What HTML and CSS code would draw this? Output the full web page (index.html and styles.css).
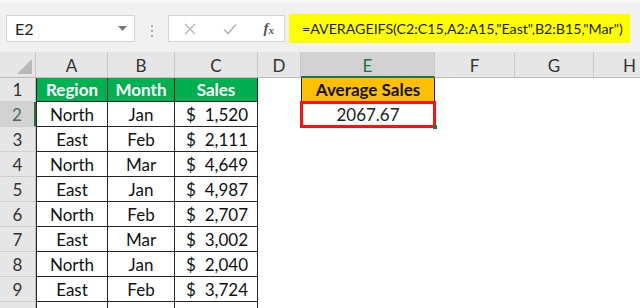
FILE: index.html
```html
<!DOCTYPE html>
<html lang="en">
<head>
    <meta charset="UTF-8">
    <title>AVERAGEIFS</title>
    <link rel="stylesheet" href="styles.css">
</head>
<body>

<div class="toolbar">
    <div class="namebox">
        <span>E2</span>
        <svg class="caret" width="9" height="5" viewBox="0 0 9 5"><path d="M0 0h9L4.5 5z" fill="#7a7a7a"/></svg>
    </div>
    <div class="grip"><i></i><i></i><i></i></div>
    <div class="fbuttons">
        <svg width="12" height="12" viewBox="0 0 12 12"><path d="M1 1l10 10M11 1L1 11" stroke="#b4b4b4" stroke-width="1.3"/></svg>
        <svg width="14" height="12" viewBox="0 0 14 12"><path d="M1 6.5l4 4L13 1.5" stroke="#b4b4b4" stroke-width="1.6" fill="none"/></svg>
        <span class="fx">f<sub>x</sub></span>
    </div>
    <div class="formula">=AVERAGEIFS(C2:C15,A2:A15,"East",B2:B15,"Mar")</div>
</div>

<div class="sheet">
    <!-- column headers -->
    <div class="corner"><span class="tri"></span></div>
    <div class="colhead">A</div>
    <div class="colhead">B</div>
    <div class="colhead">C</div>
    <div class="colhead">D</div>
    <div class="colhead sel">E</div>
    <div class="colhead">F</div>
    <div class="colhead">G</div>
    <div class="colhead">H</div>

    <!-- row 1 -->
    <div class="rowhead">1</div>
    <div class="tbl first hd">Region</div>
    <div class="tbl hd">Month</div>
    <div class="tbl hd">Sales</div>
    <div class="cell"></div>
    <div class="avg-h">Average Sales</div>
    <div class="cell"></div>
    <div class="cell"></div>
    <div class="cell"></div>

    <!-- row 2 -->
    <div class="rowhead sel">2</div>
    <div class="tbl first">North</div>
    <div class="tbl">Jan</div>
    <div class="tbl acct"><span>$</span><span>1,520</span></div>
    <div class="cell"></div>
    <div class="avg-v">2067.67</div>
    <div class="cell"></div>
    <div class="cell"></div>
    <div class="cell"></div>

    <div class="rowhead">3</div>
    <div class="tbl first">East</div>
    <div class="tbl">Feb</div>
    <div class="tbl acct"><span>$</span><span>2,111</span></div>
    <div class="cell wide"></div>

    <div class="rowhead">4</div>
    <div class="tbl first">North</div>
    <div class="tbl">Mar</div>
    <div class="tbl acct"><span>$</span><span>4,649</span></div>
    <div class="cell wide"></div>

    <div class="rowhead">5</div>
    <div class="tbl first">East</div>
    <div class="tbl">Jan</div>
    <div class="tbl acct"><span>$</span><span>4,987</span></div>
    <div class="cell wide"></div>

    <div class="rowhead">6</div>
    <div class="tbl first">North</div>
    <div class="tbl">Feb</div>
    <div class="tbl acct"><span>$</span><span>2,707</span></div>
    <div class="cell wide"></div>

    <div class="rowhead">7</div>
    <div class="tbl first">East</div>
    <div class="tbl">Mar</div>
    <div class="tbl acct"><span>$</span><span>3,002</span></div>
    <div class="cell wide"></div>

    <div class="rowhead">8</div>
    <div class="tbl first">North</div>
    <div class="tbl">Jan</div>
    <div class="tbl acct"><span>$</span><span>2,040</span></div>
    <div class="cell wide"></div>

    <div class="rowhead">9</div>
    <div class="tbl first">East</div>
    <div class="tbl">Feb</div>
    <div class="tbl acct"><span>$</span><span>3,724</span></div>
    <div class="cell wide"></div>

    <!-- row 10 is cut by the window edge -->
    <div class="rowhead last"></div>
    <div class="tbl first last"></div>
    <div class="tbl last"></div>
    <div class="tbl last"></div>
    <div class="cell wide"></div>
</div>

</body>
</html>
```

FILE: styles.css
```css
body {
    margin: 0;
    width: 640px;
    height: 308px;
    overflow: hidden;
    background: #fff;
    font-family: Lato, "Open Sans", sans-serif;
}

/* formula bar area */
.toolbar {
    display: flex;
    align-items: flex-start;
    height: 52px;
    box-sizing: border-box;
    padding: 14px 0 0 6px;
    background: #f1f1f1;
    border-top: 3px solid #f7f7f7;
}

.namebox {
    display: flex;
    align-items: center;
    justify-content: space-between;
    width: 129px;
    height: 27px;
    margin-top: -2px;
    box-sizing: border-box;
    padding: 0 7px 0 8px;
    background: #fff;
    border: 1px solid #d4d4d4;
    font-size: 16px;
    color: #222;
}

.grip {
    display: flex;
    flex-direction: column;
    gap: 3px;
    width: 33px;
    align-items: center;
    padding-top: 8px;
}

.grip i {
    width: 2px;
    height: 2px;
    background: #a8a8a8;
}

.fbuttons {
    display: flex;
    align-items: center;
    justify-content: space-between;
    width: 117px;
    height: 27px;
    margin-top: -2px;
    box-sizing: border-box;
    padding: 0 10px 0 15px;
    background: #fff;
    border: 1px solid #d4d4d4;
}

.fx {
    font-family: "Liberation Serif", serif;
    font-style: italic;
    font-weight: bold;
    font-size: 15px;
    color: #555;
}

.fx sub {
    font-size: 11px;
    vertical-align: -1px;
}

.formula {
    width: 341px;
    height: 29px;
    margin-left: 4px;
    margin-top: -3px;
    box-sizing: border-box;
    padding: 6px 0 0 13px;
    background: #ffff00;
    font-size: 14.2px;
    color: #1a1a1a;
    white-space: nowrap;
}

/* worksheet grid */
.sheet {
    display: grid;
    grid-template-columns: 36px 72px 67px 83px 43px 134px 80px 79px 72px;
    grid-template-rows: 26px 24px repeat(8, 25px) 6px;
    font-size: 17px;
}

.corner, .colhead, .rowhead {
    background: #e6e6e6;
    color: #333;
    box-sizing: border-box;
    display: flex;
    align-items: center;
    justify-content: center;
}

.corner {
    position: relative;
    border-right: 1px solid #c8c8c8;
    border-bottom: 1px solid #bcbcbc;
}

.corner .tri {
    position: absolute;
    right: 3px;
    bottom: 3px;
    border-left: 15px solid transparent;
    border-bottom: 15px solid #b8b8b8;
}

.colhead {
    border-right: 1px solid #c8c8c8;
    border-bottom: 1px solid #bcbcbc;
    padding-top: 2px;
}

.colhead.sel {
    background: #d2d2d2;
    color: #217346;
    border-bottom: 2px solid #217346;
}

.rowhead {
    border-right: 1px solid #bcbcbc;
    border-bottom: 1px solid #cfcfcf;
}

.rowhead.sel {
    background: #d2d2d2;
    color: #4a6a55;
    border-right: 2px solid #217346;
}

.cell {
    background: #fff;
}

.cell.wide {
    grid-column: span 5;
}

.tbl {
    display: flex;
    align-items: center;
    justify-content: center;
    box-sizing: border-box;
    border-right: 1px solid #262626;
    border-bottom: 1px solid #262626;
    color: #111;
}

.tbl.first {
    border-left: 1px solid #262626;
}

.tbl.last, .rowhead.last {
    border-bottom: none;
}

.tbl.hd {
    background: #00b050;
    color: #fff;
    font-weight: bold;
}

.tbl.acct {
    justify-content: space-between;
    padding: 0 9px 0 11px;
}

.avg-h {
    display: flex;
    align-items: center;
    justify-content: center;
    box-sizing: border-box;
    background: #ffc000;
    border: 1px solid #262626;
    border-top: none;
    font-weight: bold;
    color: #111;
}

.avg-v {
    position: relative;
    display: flex;
    align-items: center;
    justify-content: center;
    margin: -1px -1px -1px -1px;
    border: 3px solid #ff1010;
    color: #222;
}

.avg-v::after {
    content: "";
    position: absolute;
    right: -4px;
    bottom: -4px;
    width: 4px;
    height: 4px;
    background: #217346;
}
```
